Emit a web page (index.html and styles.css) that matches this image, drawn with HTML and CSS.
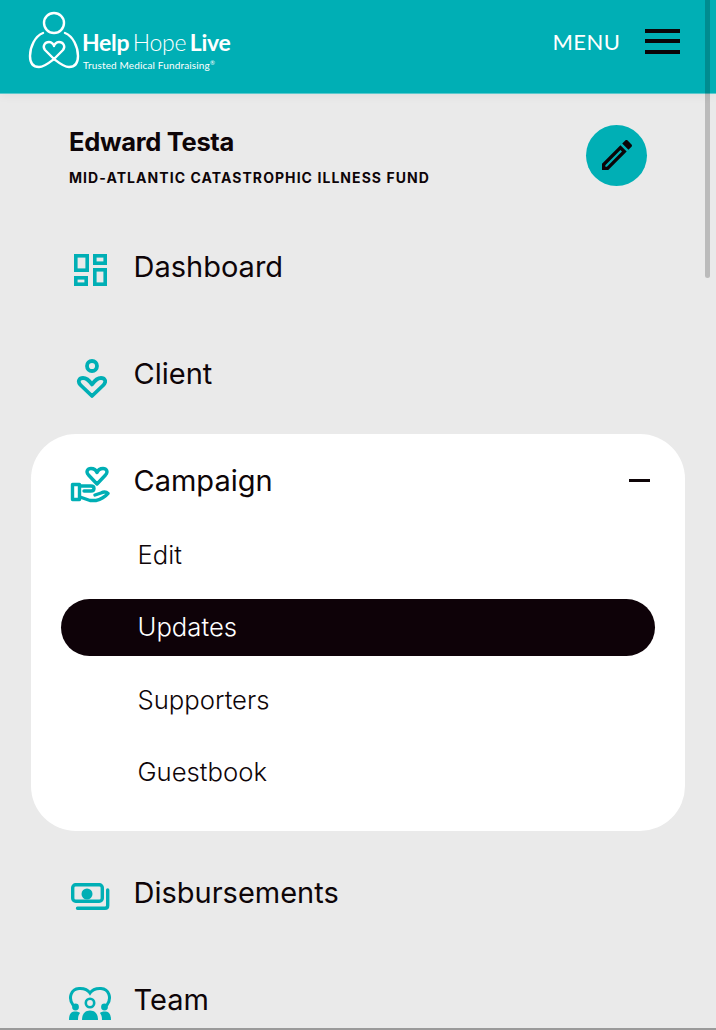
FILE: index.html
```html
<!DOCTYPE html>
<html lang="en">
<head>
    <meta charset="UTF-8">
    <meta name="viewport" content="width=device-width, initial-scale=1.0">
    <title>Help Hope Live</title>
    <link rel="stylesheet" href="styles.css">
</head>
<body>

    <header class="topbar">
        <a class="logo" href="#">
            <svg class="logo-mark" width="52" height="60" viewBox="27 11 52 60" fill="none" stroke="#fff" stroke-width="2.4" stroke-linecap="round" stroke-linejoin="round">
                <circle cx="53" cy="23" r="10"/>
                <path d="M42 33C34 36 29 47 29 56C29 64 33 67 38 67C44 67 49 62 53 59L62 50C65 46 62 42 58 42C55 42 53 45 53 46C53 45 51 42 48 42C44 42 41 46 44 50L53 59C57 62 62 67 68 67C73 67 77 64 77 56C77 47 72 36 64 33"/>
            </svg>
            <div class="logo-text">
                <div class="logo-name"><b>Help</b> <span>Hope</span> <b>Live</b></div>
                <div class="logo-tag">Trusted Medical Fundraising<sup>®</sup></div>
            </div>
        </a>
        <div class="menu-toggle">
            <span class="menu-label">MENU</span>
            <div class="burger"><i></i><i></i><i></i></div>
        </div>
    </header>

    <section class="profile">
        <div class="profile-text">
            <h1 class="profile-name">Edward Testa</h1>
            <p class="profile-fund">MID-ATLANTIC CATASTROPHIC ILLNESS FUND</p>
        </div>
        <a class="edit-btn" href="#">
            <svg width="40" height="40" viewBox="0 0 24 24" fill="#0b0508">
                <path d="M3 17.25V21h3.75L17.81 9.94l-3.75-3.75L3 17.25zM5.92 19H5v-.92l9.06-9.06.92.92L5.92 19zM20.71 7.04c.39-.39.39-1.02 0-1.41l-2.34-2.34c-.39-.39-1.02-.39-1.41 0l-1.83 1.83 3.75 3.75 1.83-1.83z"/>
            </svg>
        </a>
    </section>

    <nav class="nav">
        <a class="nav-row" href="#">
            <span class="nav-icon">
                <svg width="33" height="37" viewBox="0 -5 33 37" fill="none" stroke="#00afb5" stroke-width="3.6">
                    <rect x="1.800" y="1.800" width="11.400" height="14.400"/>
                    <rect x="20.800" y="1.800" width="10.400" height="7.400"/>
                    <rect x="1.800" y="23.800" width="10.400" height="6.400"/>
                    <rect x="20.800" y="15.800" width="10.400" height="14.400"/>
                </svg>
            </span>
            <span class="nav-text">Dashboard</span>
        </a>
        <a class="nav-row" href="#">
            <span class="nav-icon">
                <svg width="34" height="46" viewBox="0 0 34 46" fill="none" stroke="#00afb5" stroke-width="3.800" stroke-linejoin="round">
                    <circle cx="19" cy="14" r="5"/>
                    <path d="M19 44L7.500 33C4 29 6.500 26 10 26C13.500 26 16 28 19 32.500C22 28 24.500 26 28 26C31.500 26 34 29 30.500 33Z"/>
                </svg>
            </span>
            <span class="nav-text">Client</span>
        </a>

        <div class="nav-card">
            <div class="nav-row nav-head">
                <span class="nav-icon">
                    <svg width="40" height="44" viewBox="0 0 40 44" fill="none" stroke="#00afb5" stroke-width="3.400" stroke-linejoin="round" stroke-linecap="round">
                        <path d="M27 25L18.500 16C15.500 12.500 17.500 9.500 21 9.500C24 9.500 26 11 27 13.500C28 11 30 9.500 33 9.500C36.500 9.500 38.500 12.500 35.500 16Z"/>
                        <rect x="2.500" y="25.500" width="7" height="15"/>
                        <path d="M10 27H21C25 27 25 32 21 32H14M10 38L20 41.500H26C30 41 36 37 38 34.500C36 32.500 33 33 31 34L25 36"/>
                    </svg>
                </span>
                <span class="nav-text">Campaign</span>
                <span class="collapse-bar"></span>
            </div>
            <ul class="subnav">
                <li><a href="#">Edit</a></li>
                <li><a class="active" href="#">Updates</a></li>
                <li><a href="#">Supporters</a></li>
                <li><a href="#">Guestbook</a></li>
            </ul>
        </div>

        <a class="nav-row" href="#">
            <span class="nav-icon">
                <svg width="40" height="32" viewBox="0 0 40 32" fill="none" stroke="#00afb5" stroke-width="3.400" stroke-linecap="round">
                    <rect x="2.700" y="6.700" width="29.600" height="16.600" rx="3"/>
                    <circle cx="17" cy="16" r="5.500" fill="#00afb5" stroke="none"/>
                    <path d="M37.700 12V27.500C37.700 29.500 36.700 30.300 35 30.300H7.500"/>
                </svg>
            </span>
            <span class="nav-text">Disbursements</span>
        </a>
        <a class="nav-row" href="#">
            <span class="nav-icon">
                <svg width="44" height="38" viewBox="0 -4 44 38" fill="none" stroke="#00afb5" stroke-width="3" stroke-linecap="round">
                    <path d="M5 19C0 12 3 3 11 2.500C16 2.200 20 4 22 7C24 4 28 2.200 33 2.500C41 3 44 12 39 19"/>
                    <circle cx="22" cy="17" r="4.200" stroke-width="2.600"/>
                    <circle cx="7.500" cy="21" r="3.400" fill="#00afb5" stroke="none"/>
                    <circle cx="36.500" cy="21" r="3.400" fill="#00afb5" stroke="none"/>
                    <path d="M1 34C1 28 3 25.500 7.500 25.500C9.500 25.500 11 26 12 27C10.500 29 10 31 10 34Z" fill="#00afb5" stroke="none"/>
                    <path d="M43 34C43 28 41 25.500 36.500 25.500C34.500 25.500 33 26 32 27C33.500 29 34 31 34 34Z" fill="#00afb5" stroke="none"/>
                    <path d="M14 34C14 28 17 24.500 22 24.500C27 24.500 30 28 30 34Z" fill="#00afb5" stroke="none"/>
                </svg>
            </span>
            <span class="nav-text">Team</span>
        </a>
    </nav>

    <div class="scroll-thumb"></div>
    <div class="bottom-edge"></div>

</body>
</html>
```

FILE: styles.css
```css
body {
    margin: 0;
    height: 1030px;
    overflow: hidden;
    background-color: #eaeaea;
    color: #0e0508;
    font-family: "Inter", "Liberation Sans", sans-serif;
    position: relative;
}
a {
    color: inherit;
    text-decoration: none;
}

.topbar {
    height: 94px;
    background-color: #00afb5;
    display: flex;
    align-items: flex-start;
    justify-content: space-between;
    padding: 0 36px 0 28px;
    box-shadow: 0 1px 10px rgba(0, 0, 0, 0.06);
    border-bottom: 1px solid #5cc9cd;
    box-sizing: border-box;
}
.logo {
    display: flex;
    align-items: flex-start;
    color: #fff;
    padding-top: 11px;
}
.logo-mark {
    display: block;
}
.logo-text {
    margin: 17px 0 0 2px;
}
.logo-name {
    font-family: "Lato", sans-serif;
    font-size: 23px;
    line-height: 28px;
    letter-spacing: -0.3px;
    word-spacing: -2px;
}
.logo-name b {
    font-weight: 700;
}
.logo-name span {
    font-weight: 300;
}
.logo-tag {
    font-family: "Lato", sans-serif;
    font-size: 10px;
    line-height: 11px;
    letter-spacing: 0.15px;
    margin: 4px 0 0 1px;
}
.logo-tag sup {
    font-size: 6px;
    line-height: 0;
}
.menu-toggle {
    display: flex;
    align-items: center;
    gap: 24.500px;
    height: 82px;
}
.menu-label {
    font-family: "Lato", sans-serif;
    font-size: 22px;
    color: #fff;
    letter-spacing: 0.5px;
}
.burger {
    width: 35px;
    display: flex;
    flex-direction: column;
    gap: 6.500px;
}
.burger i {
    display: block;
    height: 4px;
    background-color: #0b0508;
}

.profile {
    height: 120px;
    display: flex;
    align-items: center;
    justify-content: space-between;
    padding: 0 69px;
    box-sizing: border-box;
}
.profile-text {
    margin-top: 5px;
}
.profile-name {
    margin: 0;
    font-size: 25.500px;
    font-weight: 700;
    line-height: 30px;
    letter-spacing: -0.3px;
}
.profile-fund {
    margin: 12px 0 0;
    font-size: 14px;
    font-weight: 700;
    line-height: 18px;
    letter-spacing: 1.060px;
}
.edit-btn {
    width: 61px;
    height: 61px;
    border-radius: 50%;
    background-color: #00afb5;
    display: flex;
    align-items: center;
    justify-content: center;
    margin-top: 2px;
}

.nav-row {
    height: 107px;
    display: flex;
    align-items: center;
    box-sizing: border-box;
    padding: 0 0 2px 68px;
    font-size: 29px;
    font-weight: 400;
    letter-spacing: 0;
}
.nav-icon {
    width: 44px;
    margin-top: 2px;
    margin-right: 21.500px;
    display: flex;
    justify-content: center;
}
.nav-card {
    margin: 6px 31px 9px;
    padding: 1px 30px 30px;
    background-color: #fff;
    border-radius: 45px;
}
.nav-head {
    height: 91.500px;
    margin: 0 -30px;
    padding: 0 35px 0 37px;
}
.nav-head .nav-icon {
    margin-top: 0;
}
.collapse-bar {
    margin-left: auto;
    width: 21px;
    height: 3px;
    background-color: #0e0508;
}
.subnav {
    list-style: none;
    margin: 0;
    padding: 0;
    display: flex;
    flex-direction: column;
    gap: 15.500px;
}
.subnav a {
    height: 57px;
    display: flex;
    align-items: center;
    box-sizing: border-box;
    padding: 0 0 2px 76.500px;
    border-radius: 29px;
    font-size: 25.700px;
    font-weight: 300;
}
.subnav a.active {
    background-color: #0e0208;
    color: #fff;
}

.scroll-thumb {
    position: absolute;
    top: 0;
    left: 705px;
    width: 5px;
    height: 278px;
    border-radius: 0 0 3px 3px;
    background-color: rgba(0, 0, 0, 0.2);
}
.bottom-edge {
    position: absolute;
    left: 0;
    right: 0;
    bottom: 0;
    height: 2px;
    background-color: #9a9a9a;
}
```
